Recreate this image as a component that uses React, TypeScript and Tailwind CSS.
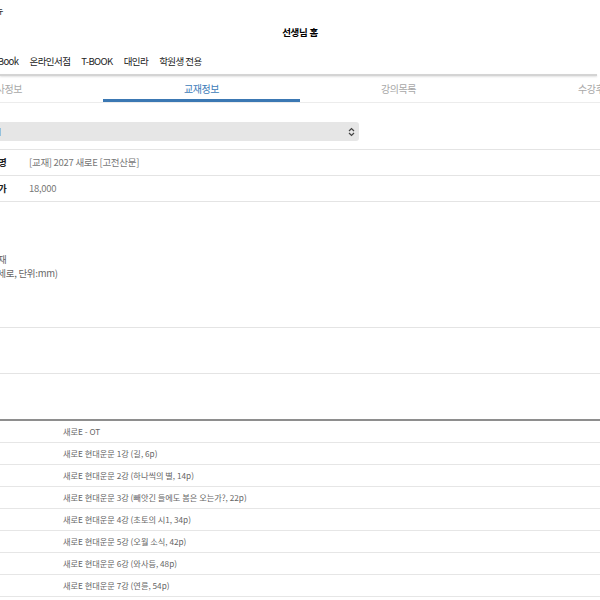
import React from 'react';

const tabs = ['강사정보', '교재정보', '강의목록', '수강후기'];

const lectures = [
    '새로E - OT',
    '새로E 현대운문 1강 (길, 6p)',
    '새로E 현대운문 2강 (하나씩의 별, 14p)',
    '새로E 현대운문 3강 (빼앗긴 들에도 봄은 오는가?, 22p)',
    '새로E 현대운문 4강 (초토의 시1, 34p)',
    '새로E 현대운문 5강 (오월 소식, 42p)',
    '새로E 현대운문 6강 (와사등, 48p)',
    '새로E 현대운문 7강 (연륜, 54p)',
];

const SelectArrows = () => (
    <svg width="7" height="10" viewBox="0 0 7 10" fill="none" stroke="#444" strokeWidth="1.2">
        <path d="M1 4 L3.5 1.5 L6 4" />
        <path d="M1 6 L3.5 8.5 L6 6" />
    </svg>
);

const App: React.FC = () => {
    return (
        <div className="w-[600px] h-[600px] overflow-hidden bg-white text-[#333] font-['Noto_Sans_CJK_KR','Noto_Sans',sans-serif]">
            {/* status row */}
            <div className="h-[20px] flex items-center -ml-[14px] text-[9.5px] text-[#333]">
                <span>메뉴</span>
            </div>

            {/* title */}
            <div className="h-[24px] flex items-center justify-center text-[9.5px] font-bold text-black tracking-[-0.03em]">
                선생님 홈
            </div>

            {/* nav */}
            <div className="h-[30px] pt-[4px] flex items-center gap-[11px] -ml-[10px] text-[9.5px] tracking-[-0.06em] text-[#222]">
                <span>E-Book</span>
                <span>온라인서점</span>
                <span>T-BOOK</span>
                <span>대인라</span>
                <span>학원생 전용</span>
            </div>
            <div className="h-[2px] bg-[#d4d4d4] shadow-[0_1px_2px_rgba(0,0,0,0.12)] mr-[3px]" />

            {/* tabs */}
            <div className="flex -ml-[94px] border-b border-[#ececec]">
                {tabs.map((t, i) => (
                    <div
                        key={t}
                        className={
                            i === 1
                                ? 'w-[197px] shrink-0 h-[26px] flex items-center justify-center text-[10px] tracking-[-0.04em] text-[#3c7bb8] border-b-[3px] border-[#3b78b3] pt-[1px]'
                                : 'w-[197px] shrink-0 h-[26px] flex items-center justify-center text-[10px] tracking-[-0.04em] text-[#a8a8a8] border-b-[3px] border-transparent pt-[1px]'
                        }
                    >
                        {t}
                    </div>
                ))}
            </div>

            {/* select */}
            <div className="mt-[19px] -ml-[20px] w-[379px] h-[19px] bg-[#e6e6e6] rounded-[3px] flex items-center justify-between pl-[6px] pr-[4px] text-[8.5px] text-[#555]">
                <span className="-ml-[16px]">카테고리</span>
                <SelectArrows />
            </div>

            {/* detail rows */}
            <div className="mt-[8px] border-t border-[#e4e4e4] text-[9.5px] tracking-[-0.03em]">
                <div className="h-[26px] flex items-center border-b border-[#e4e4e4]">
                    <span className="w-[48px] -ml-[19px] font-bold text-[#222] shrink-0">교재명</span>
                    <span className="text-[#777]">[교재] 2027 새로E [고전산문]</span>
                </div>
                <div className="h-[26px] flex items-center border-b border-[#e4e4e4]">
                    <span className="w-[48px] -ml-[19px] font-bold text-[#222] shrink-0">판매가</span>
                    <span className="text-[#777]">18,000</span>
                </div>
                <div className="h-[126px] flex flex-col justify-center pt-[2px] border-b border-[#e4e4e4] text-[#666] leading-[14px]">
                    <span className="-ml-[19px]">부교재</span>
                    <span className="-ml-[27px]">(가로x세로, 단위:mm)</span>
                </div>
                <div className="h-[46px] border-b border-[#e4e4e4]" />
            </div>

            {/* lecture list */}
            <div className="mt-[45px] border-t-2 border-[#8e8e8e] text-[8.2px] text-[#666]">
                {lectures.map((l, i) => (
                    <div key={i} className="h-[22px] flex items-center border-b-[1.5px] border-[#e6e6e6]">
                        <span className="w-[63px] shrink-0" />
                        <span>{l}</span>
                    </div>
                ))}
            </div>
        </div>
    );
};

export default App;
